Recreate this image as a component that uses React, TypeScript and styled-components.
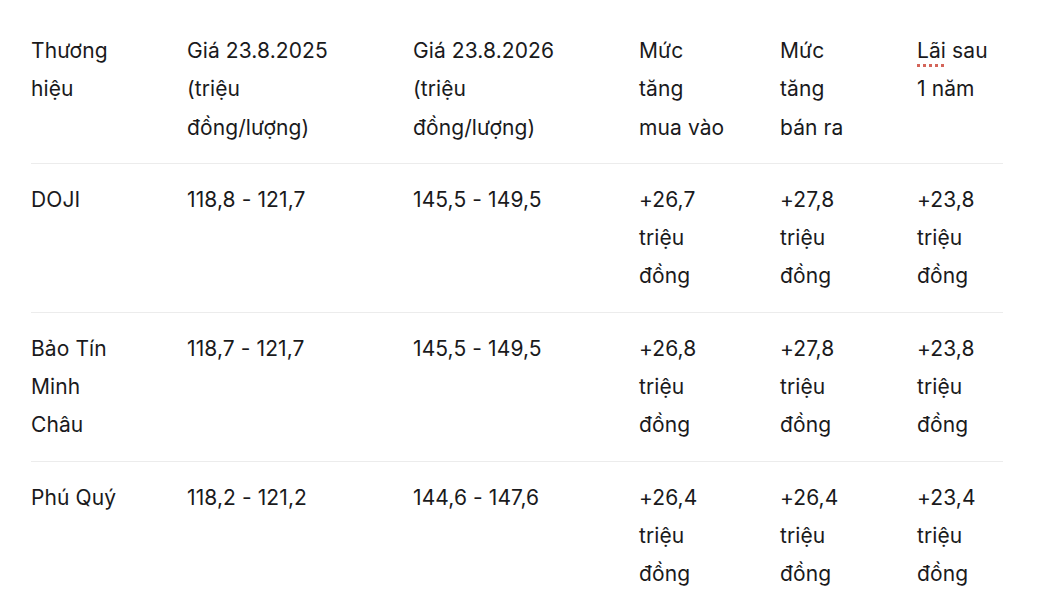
import React from "react";
import styled, { createGlobalStyle } from "styled-components";

const GlobalStyle = createGlobalStyle`
  html, body {
    margin: 0;
    padding: 0;
    background: #ffffff;
  }
  body {
    font-family: Inter, "Noto Sans", "DejaVu Sans", sans-serif;
    color: #1a1a1c;
    -webkit-font-smoothing: antialiased;
  }
`;

const Page = styled.div`
  padding: 15px 0 0 31px;
`;

const Table = styled.div`
  width: 972px;
  display: flex;
  flex-direction: column;
`;

const Row = styled.div<{ $last?: boolean }>`
  display: grid;
  grid-template-columns: 156px 226px 226px 141px 137px 86px;
  padding: 17px 0 16px;
  border-bottom: ${(p) => (p.$last ? "none" : "1px solid #ececec")};
`;

const Cell = styled.div`
  font-size: 21px;
  line-height: 38.3px;
  letter-spacing: 0.1px;
  white-space: nowrap;
`;

const Spell = styled.span`
  text-decoration: underline dotted #d4655a;
  text-decoration-thickness: 2.5px;
  text-underline-offset: 6px;
`;

const lines = (text: string) =>
  text.split("\n").map((l, i, arr) => (
    <React.Fragment key={i}>
      {l}
      {i < arr.length - 1 && <br />}
    </React.Fragment>
  ));

const rows = [
  {
    brand: "DOJI",
    p2025: "118,8 - 121,7",
    p2026: "145,5 - 149,5",
    buy: "+26,7",
    sell: "+27,8",
    gain: "+23,8",
  },
  {
    brand: "Bảo Tín\nMinh\nChâu",
    p2025: "118,7 - 121,7",
    p2026: "145,5 - 149,5",
    buy: "+26,8",
    sell: "+27,8",
    gain: "+23,8",
  },
  {
    brand: "Phú Quý",
    p2025: "118,2 - 121,2",
    p2026: "144,6 - 147,6",
    buy: "+26,4",
    sell: "+26,4",
    gain: "+23,4",
  },
];

export default function App() {
  return (
    <>
      <GlobalStyle />
      <Page>
        <Table>
          <Row>
            <Cell>{lines("Thương\nhiệu")}</Cell>
            <Cell>{lines("Giá 23.8.2025\n(triệu\nđồng/lượng)")}</Cell>
            <Cell>{lines("Giá 23.8.2026\n(triệu\nđồng/lượng)")}</Cell>
            <Cell>{lines("Mức\ntăng\nmua vào")}</Cell>
            <Cell>{lines("Mức\ntăng\nbán ra")}</Cell>
            <Cell>
              <Spell>Lãi</Spell> sau
              <br />1 năm
            </Cell>
          </Row>
          {rows.map((r, i) => (
            <Row key={r.brand} $last={i === rows.length - 1}>
              <Cell>{lines(r.brand)}</Cell>
              <Cell>{r.p2025}</Cell>
              <Cell>{r.p2026}</Cell>
              <Cell>{lines(`${r.buy}\ntriệu\nđồng`)}</Cell>
              <Cell>{lines(`${r.sell}\ntriệu\nđồng`)}</Cell>
              <Cell>{lines(`${r.gain}\ntriệu\nđồng`)}</Cell>
            </Row>
          ))}
        </Table>
      </Page>
    </>
  );
}
